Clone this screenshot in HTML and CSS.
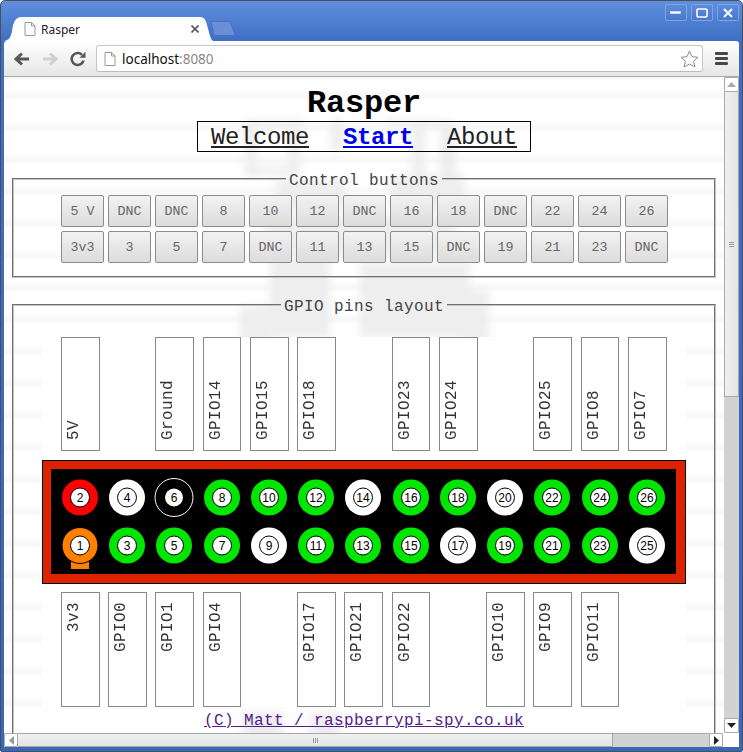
FILE: index.html
```html
<!DOCTYPE html>
<html lang="en">
<head>
<meta charset="UTF-8">
<meta name="viewport" content="width=device-width, initial-scale=1.0">
<title>Rasper</title>
<link rel="stylesheet" href="styles.css">
</head>
<body>
<div class="window">
    <div class="titlebar">
        <div class="tabs">
            <div class="tab">
                <svg class="tab-shape" width="210" height="24" viewBox="0 0 210 24"><path d="M0 24 C6 23 7 19 8 14 C9 8 10 0 18 0 L196 0 C201 0 202 4 203 8 L206 19 C207 22 208 24 210 24 Z" fill="#fff"/></svg>
                <svg class="doc-icon" width="12" height="14" viewBox="0 0 12 14"><path d="M1 .5H7.5L11 4V13.5H1Z" fill="#fff" stroke="#999"/><path d="M7.5 .5V4H11" fill="none" stroke="#999"/></svg>
                <span class="tab-title">Rasper</span>
                <svg class="tab-close" width="8" height="8" viewBox="0 0 8 8"><path d="M.5 .5L7.5 7.5M7.5 .5L.5 7.5" stroke="#555" stroke-width="1.6"/></svg>
            </div>
            <svg class="new-tab" width="25" height="15" viewBox="0 0 25 15"><path d="M1 1C1 .5 1.500 .5 2 .5H17C19 .5 20 1 21 3L24.500 13C24.500 14 24 14.500 23 14.500H7C5 14.500 4.500 14 4 13Z" fill="#6b8fd6" stroke="#4a73bd"/></svg>
        </div>
        <div class="win-buttons">
            <div class="win-btn"><svg width="12" height="4" viewBox="0 0 12 4"><rect x=".5" y=".5" width="10" height="2" fill="#fff" stroke="#dfe8f8" stroke-width=".6"/></svg></div>
            <div class="win-btn"><svg width="12" height="10" viewBox="0 0 12 10"><rect x="1" y="1" width="10" height="8" rx="1" fill="none" stroke="#fff" stroke-width="1.6"/></svg></div>
            <div class="win-btn"><svg width="10" height="10" viewBox="0 0 10 10"><path d="M1 1L9 9M9 1L1 9" stroke="#fff" stroke-width="1.8"/></svg></div>
        </div>
    </div>

    <div class="toolbar">
        <div class="tool-btn"><svg width="16" height="14" viewBox="0 0 16 14"><path d="M15 7H3M8 1.500L2 7L8 12.500" fill="none" stroke="#585858" stroke-width="3"/></svg></div>
        <div class="tool-btn"><svg width="16" height="14" viewBox="0 0 16 14"><path d="M1 7H13M8 1.500L14 7L8 12.500" fill="none" stroke="#cfcfcf" stroke-width="3"/></svg></div>
        <div class="tool-btn"><svg width="16" height="16" viewBox="0 0 16 16"><path d="M13.500 9.500A6 6 0 1 1 12 3.800" fill="none" stroke="#585858" stroke-width="2.600"/><path d="M9.500 6.800H15.500V.8Z" fill="#585858"/></svg></div>
        <div class="address">
            <svg class="doc-icon" width="12" height="14" viewBox="0 0 12 14"><path d="M1 .5H7.500L11 4V13.500H1Z" fill="#fff" stroke="#999"/><path d="M7.500 .5V4H11" fill="none" stroke="#999"/></svg>
            <span class="url">localhost<span class="url-port">:8080</span></span>
            <svg class="star" width="19" height="18" viewBox="0 0 19 18"><path d="M9.500 1L12 6.700L18 7.300L13.500 11.300L14.900 17L9.500 14L4.100 17L5.500 11.300L1 7.300L7 6.700Z" fill="#fff" stroke="#8a8a8a"/></svg>
        </div>
        <div class="menu-btn"><span></span><span></span><span></span></div>
    </div>

    <div class="content-row">
        <div class="page">
            <svg class="watermark" width="720" height="656" viewBox="4 77 720 656">
                <defs><filter id="soft"><feGaussianBlur stdDeviation="4"/></filter></defs>
                <g fill="#eeeeee" filter="url(#soft)">
                    <rect x="245" y="122" width="12" height="55"/>
                    <rect x="245" y="120" width="60" height="8"/>
                    <rect x="245" y="166" width="55" height="9"/>
                    <rect x="288" y="122" width="12" height="50"/>
                    <rect x="330" y="120" width="14" height="30"/>
                    <rect x="412" y="122" width="13" height="55"/>
                    <rect x="440" y="122" width="16" height="55"/>
                    <rect x="385" y="120" width="60" height="7"/>
                    <rect x="275" y="180" width="70" height="30"/>
                    <rect x="390" y="175" width="75" height="35"/>
                    <rect x="265" y="215" width="190" height="40"/>
                    <rect x="270" y="258" width="60" height="80"/>
                    <rect x="360" y="262" width="110" height="76"/>
                    <rect x="240" y="305" width="30" height="40"/>
                    <rect x="465" y="290" width="24" height="55"/>
                    <rect x="243" y="712" width="40" height="30"/>
                    <rect x="310" y="712" width="30" height="30"/>
                </g>
            </svg>
            <div class="page-inner">
                <h1 class="title">Rasper</h1>
                <nav class="nav">
                    <a href="#">Welcome</a>
                    <a href="#" class="nav-active">Start</a>
                    <a href="#">About</a>
                </nav>

                <fieldset class="group group-buttons">
                    <legend>Control buttons</legend>
                    <div class="button-grid">
                        <button>5 V</button><button>DNC</button><button>DNC</button><button>8</button><button>10</button><button>12</button><button>DNC</button><button>16</button><button>18</button><button>DNC</button><button>22</button><button>24</button><button>26</button>
                        <button>3v3</button><button>3</button><button>5</button><button>7</button><button>DNC</button><button>11</button><button>13</button><button>15</button><button>DNC</button><button>19</button><button>21</button><button>23</button><button>DNC</button>
                    </div>
                </fieldset>

                <fieldset class="group group-pins">
                    <legend>GPIO pins layout</legend>
                    <div class="pin-panel">
                        <div class="pin-row pin-row-top">
                            <div class="pin"><span>5V</span></div>
                            <div class="pin-gap"></div>
                            <div class="pin"><span>Ground</span></div>
                            <div class="pin pin-narrow"><span>GPIO14</span></div>
                            <div class="pin"><span>GPIO15</span></div>
                            <div class="pin"><span>GPIO18</span></div>
                            <div class="pin-gap"></div>
                            <div class="pin pin-narrow"><span>GPIO23</span></div>
                            <div class="pin"><span>GPIO24</span></div>
                            <div class="pin-gap"></div>
                            <div class="pin"><span>GPIO25</span></div>
                            <div class="pin pin-narrow"><span>GPIO8</span></div>
                            <div class="pin"><span>GPIO7</span></div>
                        </div>

                        <svg class="board" width="644" height="124" viewBox="0 0 644 124">
                            <rect x=".5" y=".5" width="643" height="123" fill="#dd2200" stroke="#000"/>
                            <rect x="9" y="9" width="625" height="105" fill="#000"/>

                            <circle class="ring-red" cx="38" cy="37.500" r="18"/><circle class="hole" cx="38" cy="37.500" r="9.500"/><text x="38" y="42">2</text>
                            <circle class="ring-white" cx="85" cy="37.500" r="18"/><circle class="hole" cx="85" cy="37.500" r="9.500"/><text x="85" y="42">4</text>
                            <circle class="ring-ground" cx="132" cy="37.500" r="19"/><circle class="hole-plain" cx="132" cy="37.500" r="9"/><text x="132" y="42">6</text>
                            <circle class="ring-green" cx="180" cy="37.500" r="18"/><circle class="hole" cx="180" cy="37.500" r="9.500"/><text x="180" y="42">8</text>
                            <circle class="ring-green" cx="227" cy="37.500" r="18"/><circle class="hole" cx="227" cy="37.500" r="9.500"/><text x="227" y="42">10</text>
                            <circle class="ring-green" cx="274" cy="37.500" r="18"/><circle class="hole" cx="274" cy="37.500" r="9.500"/><text x="274" y="42">12</text>
                            <circle class="ring-white" cx="321" cy="37.500" r="18"/><circle class="hole" cx="321" cy="37.500" r="9.500"/><text x="321" y="42">14</text>
                            <circle class="ring-green" cx="369" cy="37.500" r="18"/><circle class="hole" cx="369" cy="37.500" r="9.500"/><text x="369" y="42">16</text>
                            <circle class="ring-green" cx="416" cy="37.500" r="18"/><circle class="hole" cx="416" cy="37.500" r="9.500"/><text x="416" y="42">18</text>
                            <circle class="ring-white" cx="463" cy="37.500" r="18"/><circle class="hole" cx="463" cy="37.500" r="9.500"/><text x="463" y="42">20</text>
                            <circle class="ring-green" cx="510" cy="37.500" r="18"/><circle class="hole" cx="510" cy="37.500" r="9.500"/><text x="510" y="42">22</text>
                            <circle class="ring-green" cx="558" cy="37.500" r="18"/><circle class="hole" cx="558" cy="37.500" r="9.500"/><text x="558" y="42">24</text>
                            <circle class="ring-green" cx="605" cy="37.500" r="18"/><circle class="hole" cx="605" cy="37.500" r="9.500"/><text x="605" y="42">26</text>

                            <rect x="29" y="102" width="18" height="7" fill="#ff8000"/>
                            <circle class="ring-orange" cx="38" cy="85.500" r="18"/><circle class="hole" cx="38" cy="85.500" r="9.500"/><text x="38" y="90">1</text>
                            <circle class="ring-green" cx="85" cy="85.500" r="18"/><circle class="hole" cx="85" cy="85.500" r="9.500"/><text x="85" y="90">3</text>
                            <circle class="ring-green" cx="132" cy="85.500" r="18"/><circle class="hole" cx="132" cy="85.500" r="9.500"/><text x="132" y="90">5</text>
                            <circle class="ring-green" cx="180" cy="85.500" r="18"/><circle class="hole" cx="180" cy="85.500" r="9.500"/><text x="180" y="90">7</text>
                            <circle class="ring-white" cx="227" cy="85.500" r="18"/><circle class="hole" cx="227" cy="85.500" r="9.500"/><text x="227" y="90">9</text>
                            <circle class="ring-green" cx="274" cy="85.500" r="18"/><circle class="hole" cx="274" cy="85.500" r="9.500"/><text x="274" y="90">11</text>
                            <circle class="ring-green" cx="321" cy="85.500" r="18"/><circle class="hole" cx="321" cy="85.500" r="9.500"/><text x="321" y="90">13</text>
                            <circle class="ring-green" cx="369" cy="85.500" r="18"/><circle class="hole" cx="369" cy="85.500" r="9.500"/><text x="369" y="90">15</text>
                            <circle class="ring-white" cx="416" cy="85.500" r="18"/><circle class="hole" cx="416" cy="85.500" r="9.500"/><text x="416" y="90">17</text>
                            <circle class="ring-green" cx="463" cy="85.500" r="18"/><circle class="hole" cx="463" cy="85.500" r="9.500"/><text x="463" y="90">19</text>
                            <circle class="ring-green" cx="510" cy="85.500" r="18"/><circle class="hole" cx="510" cy="85.500" r="9.500"/><text x="510" y="90">21</text>
                            <circle class="ring-green" cx="558" cy="85.500" r="18"/><circle class="hole" cx="558" cy="85.500" r="9.500"/><text x="558" y="90">23</text>
                            <circle class="ring-white" cx="605" cy="85.500" r="18"/><circle class="hole" cx="605" cy="85.500" r="9.500"/><text x="605" y="90">25</text>
                        </svg>

                        <div class="pin-row pin-row-bottom">
                            <div class="pin"><span>3v3</span></div>
                            <div class="pin"><span>GPIO0</span></div>
                            <div class="pin"><span>GPIO1</span></div>
                            <div class="pin pin-narrow"><span>GPIO4</span></div>
                            <div class="pin-gap"></div>
                            <div class="pin"><span>GPIO17</span></div>
                            <div class="pin"><span>GPIO21</span></div>
                            <div class="pin pin-narrow"><span>GPIO22</span></div>
                            <div class="pin-gap"></div>
                            <div class="pin"><span>GPIO10</span></div>
                            <div class="pin"><span>GPIO9</span></div>
                            <div class="pin pin-narrow"><span>GPIO11</span></div>
                        </div>
                    </div>
                </fieldset>
            </div>
            <a href="#" class="footer-link">(C) Matt / raspberrypi-spy.co.uk</a>
        </div>

        <div class="vscroll">
            <div class="scroll-btn"><svg width="9" height="5" viewBox="0 0 9 5"><path d="M4.500 0L9 5H0Z" fill="#aaa"/></svg></div>
            <div class="vthumb"><span></span><span></span><span></span></div>
            <div class="vtrack"></div>
            <div class="scroll-btn"><svg width="9" height="5" viewBox="0 0 9 5"><path d="M0 0H9L4.500 5Z" fill="#222"/></svg></div>
        </div>
    </div>

    <div class="hscroll">
        <div class="hbtn"><svg width="5" height="9" viewBox="0 0 5 9"><path d="M5 0V9L0 4.500Z" fill="#999"/></svg></div>
        <div class="hthumb"><span></span><span></span><span></span></div>
        <div class="htrack"></div>
        <div class="hbtn"><svg width="5" height="9" viewBox="0 0 5 9"><path d="M0 0V9L5 4.500Z" fill="#222"/></svg></div>
        <div class="corner"></div>
    </div>
</div>
</body>
</html>
```

FILE: styles.css
```css
/* browser window */
body {
    margin: 0;
    background: #fff;
    font-family: "Liberation Mono", monospace;
}
.window {
    box-sizing: border-box;
    width: 743px;
    height: 752px;
    padding: 0 3px 4px;
    display: flex;
    flex-direction: column;
    overflow: hidden;
    border: 1px solid #4a4f5a;
    border-radius: 5px 5px 2px 2px;
    background: linear-gradient(#5f8fdd 0, #3e6ec3 41px, #3a68b8 100%);
}
.titlebar {
    height: 40px;
    display: flex;
    justify-content: space-between;
    flex-shrink: 0;
}
.tabs {
    display: flex;
    align-items: flex-end;
}
.tab {
    position: relative;
    width: 210px;
    height: 24px;
    display: flex;
    align-items: center;
    font-family: "Noto Sans", sans-serif;
    font-size: 12px;
    color: #222;
}
.tab-shape {
    position: absolute;
    left: 0;
    top: 0;
}
.tab .doc-icon {
    position: relative;
    margin-left: 20px;
}
.tab-title {
    position: relative;
    margin-left: 5px;
    flex: 1;
}
.tab-close {
    position: relative;
    margin-right: 15px;
}
.new-tab {
    margin: 0 0 5px -4px;
}
.win-buttons {
    display: flex;
    gap: 4px;
    padding-top: 3px;
}
.win-btn {
    box-sizing: border-box;
    width: 22px;
    height: 17px;
    display: flex;
    align-items: center;
    justify-content: center;
    border: 1px solid #7ea3e4;
    border-radius: 2px;
    background: linear-gradient(#5c8bdc, #4a79cc);
}

/* toolbar */
.toolbar {
    height: 36px;
    flex-shrink: 0;
    box-sizing: border-box;
    padding-left: 4px;
    display: flex;
    align-items: center;
    border-bottom: 1px solid #a8a8a8;
    border-radius: 3px 3px 0 0;
    background: linear-gradient(#fff, #e6e6e6);
}
.tool-btn {
    width: 28px;
    display: flex;
    justify-content: center;
}
.address {
    box-sizing: border-box;
    flex: 1;
    height: 27px;
    margin-left: 4px;
    padding: 0 3px 0 7px;
    display: flex;
    align-items: center;
    border: 1px solid #c8c8c8;
    border-bottom-color: #bbb;
    border-radius: 3px;
    background: #fff;
    font-family: "Noto Sans", sans-serif;
    font-size: 13.500px;
}
.url {
    margin-left: 6px;
    flex: 1;
    color: #111;
}
.url-port {
    color: #888;
}
.menu-btn {
    width: 36px;
    display: flex;
    flex-direction: column;
    align-items: center;
    gap: 2px;
}
.menu-btn span {
    width: 13px;
    height: 3px;
    border-radius: 1px;
    background: #484848;
}

/* page */
.content-row {
    flex: 1;
    min-height: 0;
    display: flex;
}
.page {
    position: relative;
    flex: 1;
    overflow: hidden;
    background: repeating-linear-gradient(#fff 0, #fff 11px, #f8f8f8 15px, #f8f8f8 18px, #fff 22px, #fff 32px);
    background-position: 0 2px;
}
.watermark {
    position: absolute;
    left: 0;
    top: 0;
}
.page-inner {
    position: relative;
    padding: 0 8px;
}
.title {
    margin: 9px 0 0;
    text-align: center;
    font-size: 32px;
    line-height: 35px;
    letter-spacing: -.2px;
    color: #000;
}
.nav {
    box-sizing: border-box;
    width: 334px;
    height: 31px;
    margin: 0 auto;
    padding: 1px 0 0 13px;
    display: flex;
    align-items: center;
    gap: 34px;
    border: 1px solid #000;
    font-size: 24px;
    letter-spacing: -.4px;
}
.nav a {
    color: #222;
}
.nav .nav-active {
    color: #0000ee;
    font-weight: bold;
}
.group {
    min-width: 0;
    margin: 0;
    padding: 0;
    border: 2px groove #c4c4c4;
}
.group legend {
    margin: 0 auto;
    padding: 4px 3px 0;
    font-size: 16px;
    letter-spacing: .4px;
    color: #444;
}
.group-buttons {
    height: 106px;
    margin-top: 16px;
}
.button-grid {
    margin: 5px 0 0 47px;
    display: grid;
    grid-template-columns: repeat(13, 43px);
    grid-auto-rows: 32px;
    gap: 4px;
}
.button-grid button {
    padding: 0;
    border: 1px solid #8c8c8c;
    border-radius: 2px;
    background: linear-gradient(#f2f2f2, #dcdcdc);
    font-family: "Liberation Mono", monospace;
    font-size: 13.330px;
    color: #666;
}
.group-pins {
    margin-top: 16px;
    padding-bottom: 60px;
}
.pin-panel {
    width: 644px;
    margin: 21px 0 0 28px;
    display: flex;
    flex-direction: column;
    gap: 9px;
    background: #fff;
}
.pin-row {
    padding-left: 19px;
    display: grid;
    grid-template-columns: 47px 47px 48px 47px 47px 47px 48px 47px 47px 47px 48px 47px 39px;
}
.pin {
    box-sizing: border-box;
    width: 39px;
    height: 115px;
    padding-left: 3px;
    display: flex;
    border: 1px solid #888;
    background: #fff;
    font-size: 16px;
    letter-spacing: .4px;
    color: #333;
}
.pin-narrow {
    width: 38px;
}
.pin span {
    writing-mode: vertical-rl;
    transform: rotate(180deg);
}
.pin-row-top .pin {
    height: 114px;
    align-items: flex-end;
    padding-bottom: 10px;
}
.pin-row-bottom {
    margin-top: -1px;
}
.pin-row-bottom .pin {
    align-items: flex-start;
    padding-top: 9px;
}
.board {
    display: block;
}
.board text {
    font-family: "Liberation Sans", sans-serif;
    font-size: 12px;
    text-anchor: middle;
    fill: #000;
}
.hole {
    fill: #fff;
    stroke: #000;
}
.hole-plain {
    fill: #fff;
}
.ring-red {
    fill: #ff0000;
}
.ring-white {
    fill: #fff;
}
.ring-green {
    fill: #00e600;
}
.ring-orange {
    fill: #ff8000;
    stroke: #000;
}
.ring-ground {
    fill: #000;
    stroke: #fff;
}
.footer-link {
    position: absolute;
    left: 200px;
    bottom: 3px;
    font-size: 16px;
    letter-spacing: .4px;
    color: #551a8b;
}

/* scrollbars */
.vscroll {
    width: 15px;
    display: flex;
    flex-direction: column;
    background: #d2d2d2;
}
.scroll-btn {
    box-sizing: border-box;
    height: 15px;
    flex-shrink: 0;
    display: flex;
    align-items: center;
    justify-content: center;
    border: 1px solid #aaa;
    border-radius: 2px;
    background: #fff;
}
.vthumb {
    box-sizing: border-box;
    height: 305px;
    display: flex;
    flex-direction: column;
    align-items: center;
    justify-content: center;
    gap: 1px;
    border: 1px solid #a8a8a8;
    border-top: 0;
    background: linear-gradient(90deg, #f0f0f0, #e4e4e4);
}
.vthumb span {
    width: 5px;
    height: 1px;
    background: #999;
}
.vtrack {
    flex: 1;
}
.hscroll {
    height: 14px;
    flex-shrink: 0;
    display: flex;
    background: #d2d2d2;
}
.hbtn {
    box-sizing: border-box;
    width: 14px;
    display: flex;
    align-items: center;
    justify-content: center;
    border: 1px solid #aaa;
    border-radius: 2px;
    background: #fff;
}
.hthumb {
    box-sizing: border-box;
    width: 595px;
    margin-left: 0;
    display: flex;
    align-items: center;
    justify-content: center;
    gap: 1px;
    border: 1px solid #a8a8a8;
    border-left: 0;
    background: linear-gradient(#f0f0f0, #e4e4e4);
}
.hthumb span {
    width: 1px;
    height: 5px;
    background: #999;
}
.htrack {
    flex: 1;
    border-top: 1px solid #a8a8a8;
}
.corner {
    width: 16px;
    background: #fff;
}
```
